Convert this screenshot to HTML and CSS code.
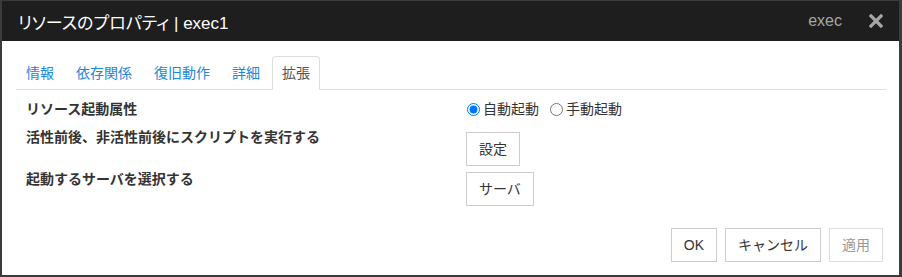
FILE: index.html
```html
<!DOCTYPE html>
<html>
  <head>
    <meta charset="utf-8" />
    <title>リソースのプロパティ</title>
    <link rel="stylesheet" href="styles.css">
  </head>
<body>

  <div class="dialog">
    <!-- タイトルバー -->
    <div class="dialog-header">
      <div class="dialog-title">リソースのプロパティ | exec1</div>
      <div class="header-right">
        <span class="resource-type">exec</span>
        <span class="close-button">
          <svg width="14" height="14" viewBox="0 0 14 14">
            <path d="M2 2 L12 12 M12 2 L2 12" stroke="#a6a6a6" stroke-width="3.2" stroke-linecap="square" />
          </svg>
        </span>
      </div>
    </div>

    <div class="dialog-body">
      <!-- タブ -->
      <ul class="nav-tabs">
        <li><a>情報</a></li>
        <li><a>依存関係</a></li>
        <li><a>復旧動作</a></li>
        <li><a>詳細</a></li>
        <li class="active"><a>拡張</a></li>
      </ul>

      <div class="tab-content">
        <div class="prop-row row-start">
          <div class="prop-label">リソース起動属性</div>
          <div class="prop-value">
            <label class="radio"><input type="radio" name="start" checked> 自動起動</label>
            <label class="radio"><input type="radio" name="start"> 手動起動</label>
          </div>
        </div>
        <div class="prop-row row-script">
          <div class="prop-label">活性前後、非活性前後にスクリプトを実行する</div>
          <div class="prop-value">
            <button class="btn">設定</button>
          </div>
        </div>
        <div class="prop-row row-server">
          <div class="prop-label">起動するサーバを選択する</div>
          <div class="prop-value">
            <button class="btn">サーバ</button>
          </div>
        </div>
      </div>

      <div class="dialog-footer">
        <button class="btn">OK</button>
        <button class="btn">キャンセル</button>
        <button class="btn" disabled>適用</button>
      </div>
    </div>
  </div>

</body>
</html>
```

FILE: styles.css
```css
body {
  margin: 0;
  padding: 1px 3px 2px 2px;
  background-color: #3b3b3b;
  font-family: "Liberation Sans", "Noto Sans CJK JP", sans-serif;
  font-size: 14px;
  color: #333;
}

.dialog {
  height: 274px;
  background-color: #fff;
  display: flex;
  flex-direction: column;
}

/* タイトルバー */
.dialog-header {
  height: 40px;
  background-color: #1e1e1e;
  display: flex;
  align-items: center;
  justify-content: space-between;
  padding: 0 16px;
}

.dialog-title {
  color: #fff;
  font-size: 17px;
  font-feature-settings: "palt";
}

.header-right {
  display: flex;
  align-items: center;
  gap: 27px;
}

.resource-type {
  color: #a6a6a6;
  font-size: 16px;
}

.close-button {
  display: flex;
  width: 14px;
  height: 14px;
}

.dialog-body {
  flex: 1;
  padding: 15px 13px 0 14px;
  display: flex;
  flex-direction: column;
}

/* タブ */
.nav-tabs {
  list-style: none;
  margin: 0;
  padding: 0;
  display: flex;
  border-bottom: 1px solid #ddd;
}

.nav-tabs li {
  margin-right: 2px;
  margin-bottom: -1px;
}

.nav-tabs a {
  display: block;
  padding: 6px 9px;
  line-height: 20px;
  color: #2386d9;
  border: 1px solid transparent;
  border-radius: 4px 4px 0 0;
}

.nav-tabs .active a {
  color: #555;
  border-color: #ddd;
  border-bottom-color: #fff;
  background-color: #fff;
}

.tab-content {
  padding: 0 10px;
}

.prop-row {
  display: flex;
  align-items: flex-start;
}

.prop-label {
  width: 440px;
  font-weight: 600;
  line-height: 20px;
}

.prop-value {
  display: flex;
  align-items: center;
  gap: 10px;
  line-height: 20px;
}

.row-start {
  margin-top: 9px;
}

.row-script {
  margin-top: 8px;
}

.row-script .prop-value {
  padding-top: 5px;
}

.row-server {
  margin-top: 3px;
}

.row-server .prop-value {
  padding-top: 3px;
}

.radio {
  display: flex;
  align-items: center;
  gap: 3px;
}

.radio input {
  margin: 0 0 0 1px;
  width: 13px;
  height: 13px;
}

.btn {
  font-family: "Liberation Sans", "Noto Sans CJK JP", sans-serif;
  font-size: 14px;
  line-height: 20px;
  padding: 6px 12px;
  color: #333;
  background-color: #fff;
  border: 1px solid #ccc;
  border-radius: 0;
}

.btn:disabled {
  color: #999;
  border-color: #ddd;
}

.dialog-footer {
  margin-top: auto;
  margin-bottom: 13px;
  margin-right: 3px;
  display: flex;
  justify-content: flex-end;
  gap: 8px;
}
```
